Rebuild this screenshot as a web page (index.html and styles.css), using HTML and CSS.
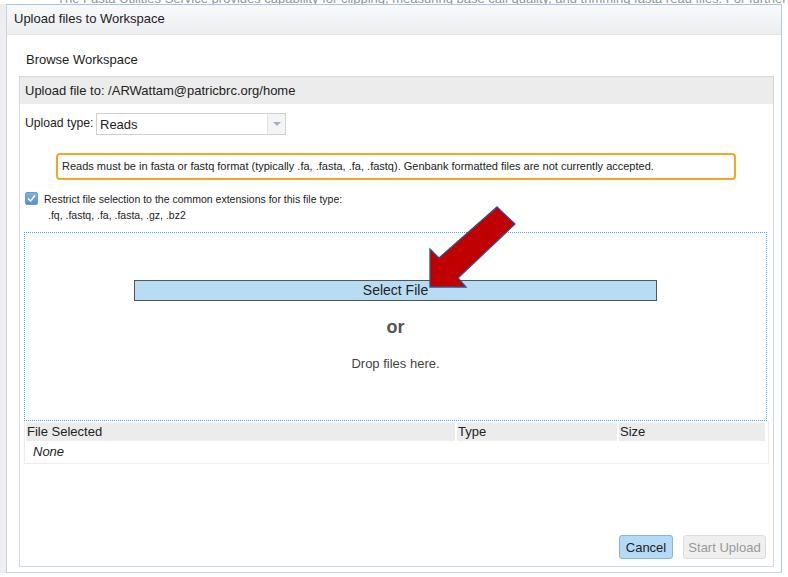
FILE: index.html
```html
<!DOCTYPE html>
<html>
<head>
<meta charset="utf-8">
<link rel="stylesheet" href="styles.css">
</head>
<body>
<p class="page-text">The Fasta Utilities Service provides capability for clipping, measuring base call quality, and trimming fasta read files. For further</p>
<div class="dialog">
  <div class="title">Upload files to Workspace</div>
  <div class="content">
    <div class="browse">Browse Workspace</div>
    <div class="panel">
      <div class="panel-head">Upload file to: /ARWattam@patricbrc.org/home</div>
      <div class="type-row">
        <span class="type-label">Upload type:</span>
        <div class="select"><span class="select-val">Reads</span><span class="select-arrow"><span class="tri"></span></span></div>
      </div>
      <div class="notice">Reads must be in fasta or fastq format (typically .fa, .fasta, .fa, .fastq). Genbank formatted files are not currently accepted.</div>
      <div class="restrict">
        <span class="check"><svg width="11" height="11" viewBox="0 0 11 11"><path d="M2 5.5 L4.5 8 L9 2.5" fill="none" stroke="#fff" stroke-width="1.6"/></svg></span>
        <div class="restrict-text">
          <div>Restrict file selection to the common extensions for this file type:</div>
          <div class="exts">.fq, .fastq, .fa, .fasta, .gz, .bz2</div>
        </div>
      </div>
      <div class="dropzone">
        <div class="select-file">Select File</div>
        <div class="or">or</div>
        <div class="drop">Drop files here.</div>
      </div>
      <div class="files">
        <div class="files-head">
          <div class="c1">File Selected</div>
          <div class="c2">Type</div>
          <div class="c3">Size</div>
        </div>
        <div class="files-row">None</div>
      </div>
      <div class="actions">
        <button class="btn cancel">Cancel</button>
        <button class="btn start">Start Upload</button>
      </div>
    </div>
  </div>
</div>
<svg class="arrow" width="788" height="577" viewBox="0 0 788 577">
  <polygon points="497,207 515,224 458,278 466,287 430,287 430,249 439,258" fill="#c00000" stroke="#34508a" stroke-width="1.3" stroke-linejoin="miter"/>
</svg>
</body>
</html>
```
FILE: styles.css
```css
html, body {
  margin: 0;
  padding: 0;
  background: #fff;
  width: 788px;
  height: 577px;
  overflow: hidden;
  font-family: "Liberation Sans", Arial, sans-serif;
  color: #222;
}
.page-text {
  position: absolute;
  left: 57px;
  top: -9px;
  margin: 0;
  font-size: 13px;
  line-height: 15px;
  color: #8c959c;
  white-space: nowrap;
}
.dialog {
  position: absolute;
  left: 6px;
  top: 4px;
  width: 774px;
  height: 567px;
  background: #fff;
  border: 1px solid #c9d3de;
  border-top-color: #a9c4de;
  border-right-color: #b4cbe2;
  box-shadow: -6px 0 0 #eeeeee;
  display: flex;
  flex-direction: column;
}
.title {
  height: 29px;
  line-height: 28px;
  padding-left: 7px;
  font-size: 13px;
  color: #222;
  background: linear-gradient(#f8f9fa, #eceef1);
  border-bottom: 1px solid #e3e5e8;
}
.content {
  padding: 0 7px 0 12px;
  flex: 1;
}
.browse {
  margin: 17px 0 0 7px;
  font-size: 13px;
  line-height: 16px;
  height: 24px;
}
.panel {
  height: 489px;
  border: 1px solid #d3d8df;
  display: flex;
  flex-direction: column;
}
.panel-head {
  height: 27px;
  line-height: 27px;
  background: #ececec;
  padding-left: 5px;
  font-size: 13px;
}
.type-row {
  display: flex;
  align-items: center;
  margin-top: 9px;
  padding-left: 5px;
  height: 22px;
  font-size: 13px;
}
.type-label {
  flex: none;
  width: 71px;
  font-size: 12.2px;
  white-space: nowrap;
  margin-top: -3px;
}
.select {
  width: 188px;
  height: 20px;
  border: 1px solid #cfcfcf;
  display: flex;
  align-items: center;
}
.select-val {
  flex: 1;
  padding-left: 3px;
}
.select-arrow {
  width: 17px;
  height: 20px;
  border-left: 1px solid #e2e2e2;
  background: #f4f4f4;
  display: flex;
  align-items: center;
  justify-content: center;
}
.tri {
  width: 0;
  height: 0;
  border-left: 4px solid transparent;
  border-right: 4px solid transparent;
  border-top: 4px solid #9fb0c2;
}
.notice {
  margin: 18px 0 0 36px;
  width: 672px;
  height: 23px;
  line-height: 23px;
  border: 2px solid #f5a623;
  border-radius: 4px;
  padding-left: 4px;
  font-size: 11px;
  color: #222;
}
.restrict {
  display: flex;
  margin: 11px 0 0 5px;
  font-size: 10.5px;
  color: #222;
}
.check {
  width: 11px;
  height: 11px;
  margin-top: 1px;
  background: linear-gradient(#7fb3e6, #4f8fd4);
  border: 1px solid #6b9ad0;
  border-radius: 2px;
  display: flex;
}
.restrict-text {
  margin-left: 6px;
  line-height: 16px;
}
.exts {
  margin-left: 4px;
}
.dropzone {
  margin: 9px 6px 0 4px;
  height: 187px;
  border: 1px dotted #3fa9f5;
  display: flex;
  flex-direction: column;
  align-items: center;
}
.select-file {
  margin-top: 47px;
  width: 521px;
  height: 19px;
  line-height: 19px;
  background: #b9dcf5;
  border: 1px solid #555;
  text-align: center;
  font-size: 14px;
  color: #222;
}
.or {
  margin-top: 16px;
  font-size: 18px;
  font-weight: bold;
  color: #555;
}
.drop {
  margin-top: 18px;
  font-size: 13px;
  color: #444;
}
.files {
  margin: 0 4px 0 4px;
  height: 40px;
  border: 1px solid #ececec;
  border-top: none;
  padding: 2px 3px 0 1px;
}
.files-head {
  display: flex;
  gap: 2px;
  height: 18px;
  line-height: 18px;
  font-size: 13px;
  color: #222;
}
.files-head div {
  background: #ececec;
  padding-left: 1px;
}
.c1 { width: 428px; }
.c2 { width: 159px; }
.c3 { flex: 1; }
.files-row {
  font-size: 13px;
  font-style: italic;
  padding-left: 7px;
  line-height: 22px;
}
.actions {
  margin-top: auto;
  display: flex;
  justify-content: flex-end;
  gap: 10px;
  padding: 0 7px 7px 0;
}
.btn {
  height: 24px;
  font-family: "Liberation Sans", Arial, sans-serif;
  font-size: 13px;
  border-radius: 3px;
  padding: 0;
  white-space: nowrap;
}
.cancel {
  width: 54px;
  background: #b5daf6;
  border: 1px solid #86b6dc;
  color: #222;
}
.start {
  width: 83px;
  background: #efefef;
  border: 1px solid #dcdcdc;
  color: #999;
}
.arrow {
  position: absolute;
  left: 0;
  top: 0;
  pointer-events: none;
}
```
